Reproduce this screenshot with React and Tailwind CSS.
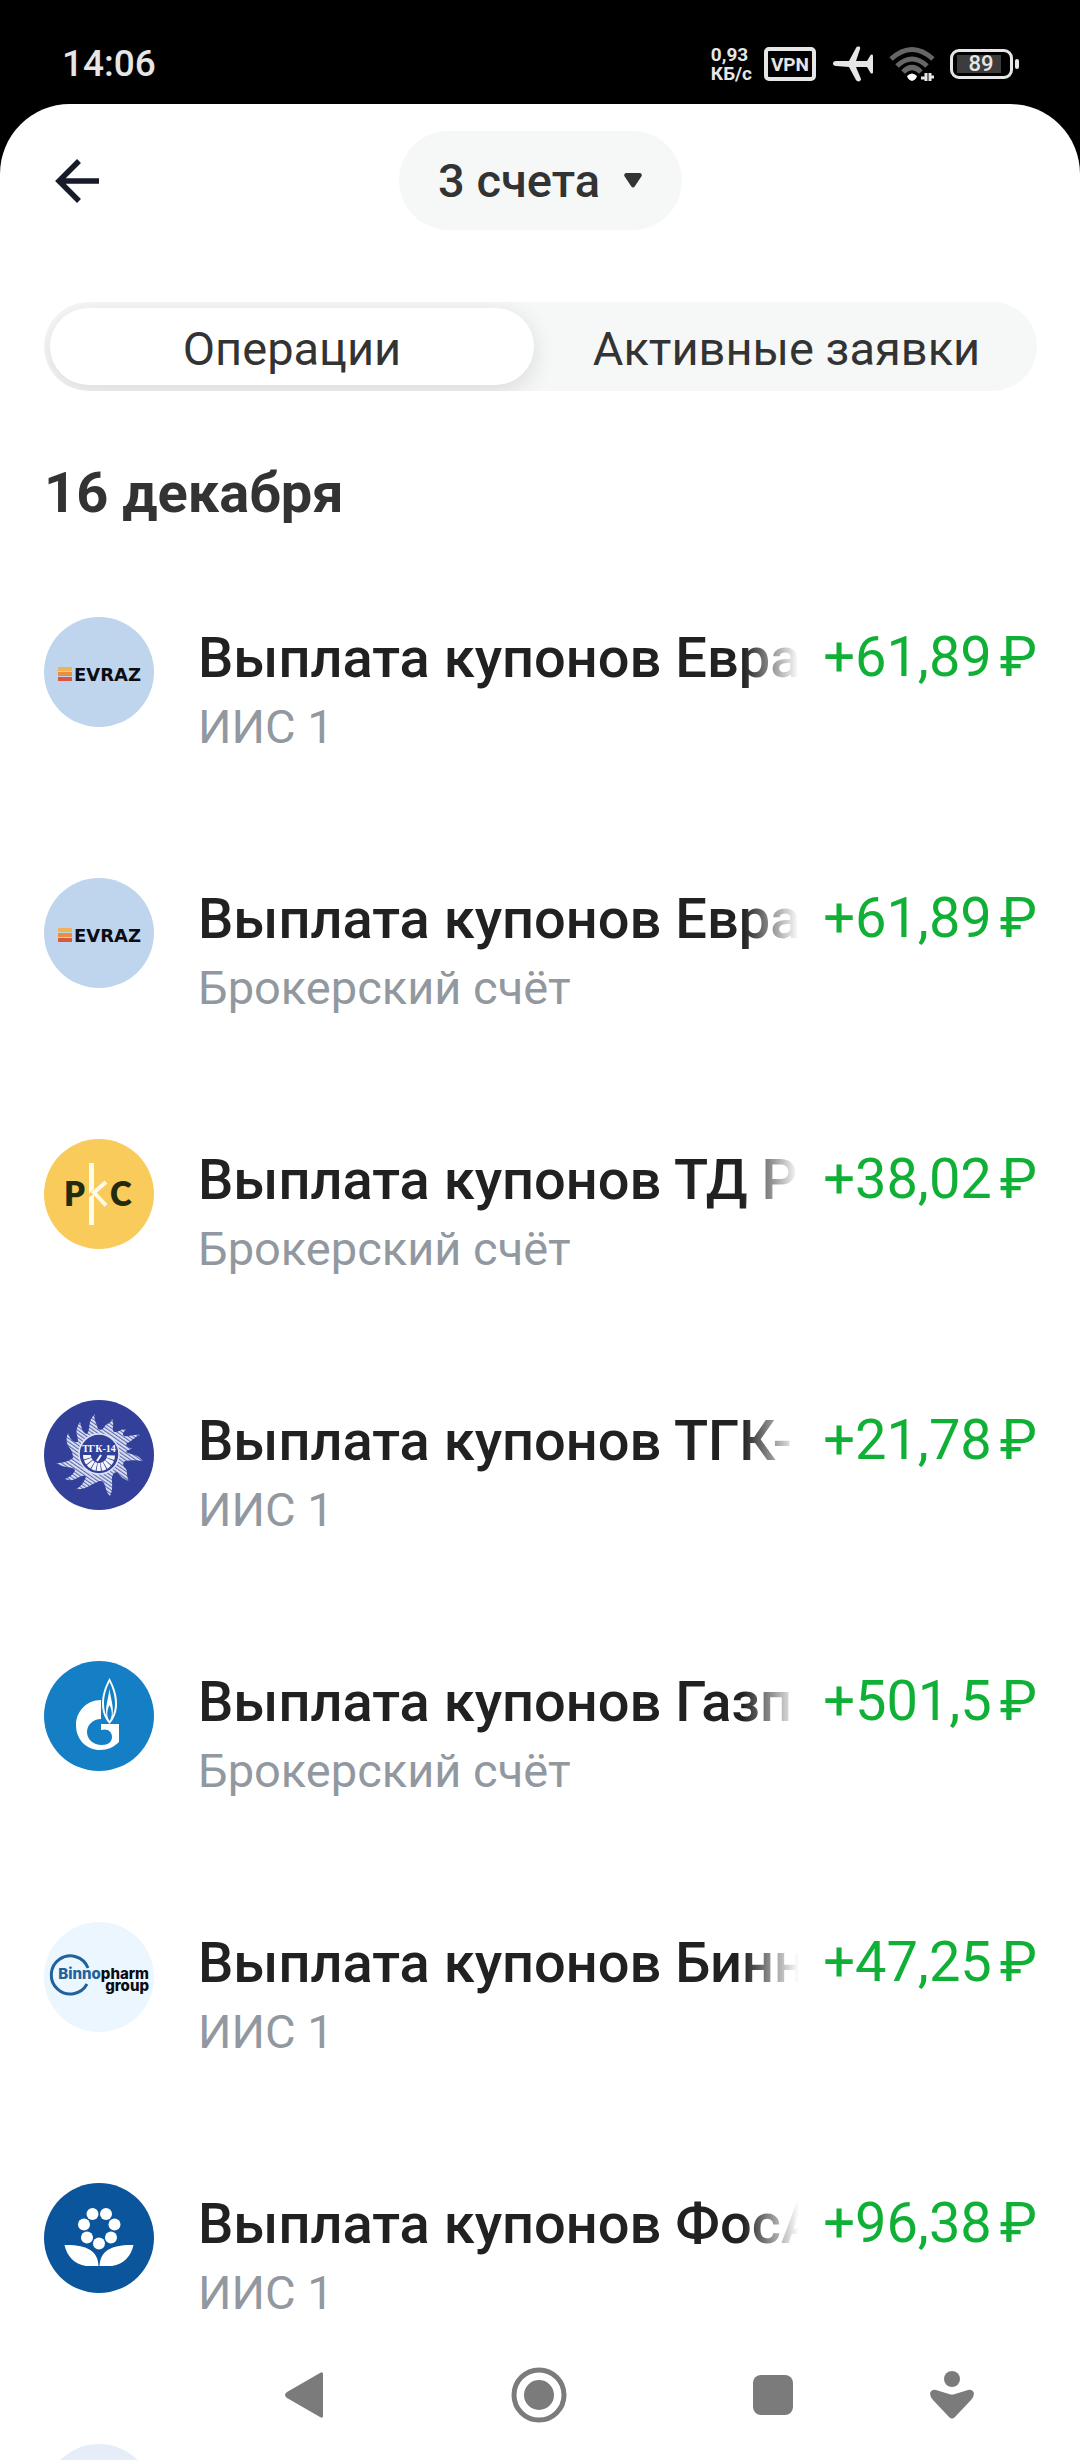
function EvrazLogo() {
    return (
        <svg viewBox="0 0 110 110" className="size-full" aria-hidden="true">
            <rect width="110" height="110" fill="#bfd5ed" />
            <rect x="14" y="50" width="14" height="4" fill="#f0b253" />
            <rect x="14" y="55" width="14" height="4" fill="#ec8f3c" />
            <rect x="14" y="60" width="14" height="4" fill="#d9583f" />
            <text x="30" y="64" fontSize="18" fontWeight="700" fontFamily="DejaVu Sans, sans-serif" fill="#0b0d14">
                EVRAZ
            </text>
        </svg>
    );
}

function RksLogo() {
    return (
        <svg viewBox="0 0 110 110" className="size-full" aria-hidden="true">
            <rect width="110" height="110" fill="#f9cb5b" />
            <g fontSize="33" fontWeight="800" fontFamily="Lato, sans-serif" fill="#222a10">
                <text x="20" y="67">P</text>
                <text x="66" y="67">C</text>
            </g>
            <path d="M45 24h5v26l-5 5zM45 58l5 -3v31h-5z" fill="#fffbea" />
            <path d="M62 43L50 53.500L62 66.500" fill="none" stroke="#fffbea" strokeWidth="4" />
        </svg>
    );
}

function TgkLogo() {
    return (
        <svg viewBox="0 0 110 110" className="size-full" aria-hidden="true">
            <defs>
                <pattern id="hatch" width="3" height="3" patternUnits="userSpaceOnUse" patternTransform="rotate(35)">
                    <rect width="3" height="3" fill="#5c68b2" />
                    <rect width="3" height="1.800" fill="#e4e8f6" />
                </pattern>
            </defs>
            <rect width="110" height="110" fill="#32409a" />
            <path
                d="M51 14C49 20 53 23 54 29C57 31 59 29 61 26C63 23 67 24 68 19C71 24 67 29 70 32C75 33 78 27 82 30C79 32 78 34 80 36C85 37 89 34 96 35C90 37 89 41 83 43C81 46 84 48 88 48C86 50 83 50 82 52C87 55 94 54 99 61C92 60 87 60 81 61C78 64 79 66 82 69C84 73 82 76 85 81C79 79 76 76 73 72C70 72 68 75 68 79C68 85 69 90 66 96C62 92 62 88 60 83C57 79 54 82 51 83C45 86 40 90 32 89C37 87 40 82 42 77C40 74 36 77 31 79C27 81 24 80 21 79C26 77 30 74 31 70C29 66 20 69 12 63C18 63 24 62 29 58C29 54 28 51 25 47C22 43 22 38 24 33C26 39 29 43 34 42C35 37 29 32 36 22C38 28 38 33 43 34C47 29 43 21 51 14Z"
                fill="url(#hatch)"
            />
            <circle cx="55" cy="54" r="20" fill="#32409a" stroke="#dfe4f5" strokeWidth="1.500" />
            <path d="M43 55a12 12 0 0 0 24 0" fill="none" stroke="#f3f5fc" strokeWidth="8" strokeDasharray="3.500 .7" />
            <path d="M57 55l-4 6" stroke="#fff" strokeWidth="2" />
            <text x="55" y="52" textAnchor="middle" fontSize="10" fontWeight="700" fontFamily="Liberation Serif, serif" fill="#fff">
                ТГК-14
            </text>
        </svg>
    );
}

function GazpromLogo() {
    return (
        <svg viewBox="0 0 110 110" className="size-full" aria-hidden="true">
            <rect width="110" height="110" fill="#147fc4" />
            <path
                d="M57 39C42 39 32 51 32 64C32 79 43 89 56 89C64 89 70 86 75 81V63H57V69C64 67 68 71 68 76C68 81 64 84 58 84C49 84 43 78 43 71C43 64 49 58 57 58Z"
                fill="#fff"
            />
            <path d="M65.500 17C60 27 58 35 58 43C58 51 61 58 65.500 63C70 58 73 51 73 43C73 35 71 27 65.500 17Z" fill="#fff" />
            <path d="M65.500 21C61.500 29 60 36 60 43C60 47 61 52 62.500 55C61 46 64 39 65.500 28C67 39 70 46 68.500 55C70 52 71 47 71 43C71 36 69.500 29 65.500 21Z" fill="#147fc4" />
            <path d="M65.500 44C63 49 62 55 65.500 60C69 55 68 49 65.500 44Z" fill="#147fc4" />
        </svg>
    );
}

function BinnopharmLogo() {
    return (
        <svg viewBox="0 0 110 110" className="size-full" aria-hidden="true">
            <rect width="110" height="110" fill="#ecf6fe" />
            <path d="M44 46A19 19 0 1 0 43 62" fill="none" stroke="#22629c" strokeWidth="3" />
            <g fontSize="15" fontWeight="800" fontFamily="Inter, sans-serif" fill="#0a0c12">
                <text x="105" y="57" textAnchor="end">
                    <tspan fill="#22629c">Binno</tspan>pharm
                </text>
                <text x="105" y="69" textAnchor="end">group</text>
            </g>
        </svg>
    );
}

function PhosagroLogo() {
    return (
        <svg viewBox="0 0 110 110" className="size-full" aria-hidden="true">
            <rect width="110" height="110" fill="#0b559c" />
            <g fill="#fff">
                <circle cx="48.500" cy="31" r="6" />
                <circle cx="62" cy="31" r="6" />
                <circle cx="40" cy="41.500" r="6" />
                <circle cx="70.500" cy="41.500" r="6" />
                <circle cx="43" cy="54.500" r="6" />
                <circle cx="67" cy="54.500" r="6" />
                <circle cx="55" cy="60.500" r="6" />
                <path d="M20.500 62C43 61.500 54 68 54.500 83H42C30 81 23 73 20.500 62Z" />
                <path d="M89.500 62C67 61.500 56 68 55.500 83H68C80 81 87 73 89.500 62Z" />
            </g>
        </svg>
    );
}

const operations = [
    { id: 1, title: "Выплата купонов Евра", account: "ИИС 1", amount: "+61,89", Logo: EvrazLogo },
    { id: 2, title: "Выплата купонов Евра", account: "Брокерский счёт", amount: "+61,89", Logo: EvrazLogo },
    { id: 3, title: "Выплата купонов ТД Р", account: "Брокерский счёт", amount: "+38,02", Logo: RksLogo },
    { id: 4, title: "Выплата купонов ТГК-", account: "ИИС 1", amount: "+21,78", Logo: TgkLogo },
    { id: 5, title: "Выплата купонов Газп", account: "Брокерский счёт", amount: "+501,5", Logo: GazpromLogo },
    { id: 6, title: "Выплата купонов Бинн", account: "ИИС 1", amount: "+47,25", Logo: BinnopharmLogo },
    { id: 7, title: "Выплата купонов ФосА", account: "ИИС 1", amount: "+96,38", Logo: PhosagroLogo },
];

function StatusBar() {
    return (
        <div className="flex h-[104px] shrink-0 items-center justify-between bg-black pt-6 pr-[61px] pl-[62px] text-[#e6e6e6]">
            <span className="text-[37px] leading-10 font-medium">14:06</span>
            <div className="flex items-center">
                <div className="text-[19px] leading-[19px] font-bold">
                    <div>0,93</div>
                    <div>КБ/с</div>
                </div>
                <span className="ml-3 flex h-[34px] w-[52px] items-center justify-center rounded-[5px] border-4 border-[#e6e6e6] text-[19px] leading-none font-bold">
                    VPN
                </span>
                <svg viewBox="0 0 40 36" className="ml-[17px] h-9 w-10" fill="#e6e6e6" aria-hidden="true">
                    <path d="M3 15H16L23 2C24 0 28 0 27 3L23 15H34L37 10C38 8 40 8 40 10V26C40 28 38 28 37 26L34 21H23L28 33C28 36 24 36 23 34L16 21L3 20C-1 20 -1 15 3 15Z" />
                </svg>
                <svg viewBox="0 0 46 36" className="ml-4 h-9 w-[46px]" fill="none" aria-hidden="true">
                    <g stroke="#666" strokeWidth="5">
                        <path d="M2 13Q23 -6 44 13" />
                        <path d="M8 20Q23 6 38 20" />
                        <path d="M14 26Q23 17 32 26" />
                    </g>
                    <path d="M18 30Q23 25 28 30Q27 34 23 35Q19 34 18 30Z" fill="#fff" />
                    <path d="M37 27V35M32 32H37M41 35V27M41 31H45" stroke="#e6e6e6" strokeWidth="3" />
                </svg>
                <span className="ml-[15px] flex h-[30px] w-[63px] items-center rounded-[9px] border-[3px] border-[#e6e6e6] px-1">
                    <span className="flex h-[18px] w-11 items-center justify-center bg-[#3c3c3c] pl-1 text-[22px] leading-none font-medium">
                        89
                    </span>
                </span>
                <span className="ml-0.5 h-[10px] w-1 rounded-sm bg-[#e6e6e6]" />
            </div>
        </div>
    );
}

function Operation({ title, account, amount, Logo }) {
    return (
        <li className="flex h-[261px] shrink-0 items-start">
            <div className="size-[110px] shrink-0 overflow-hidden rounded-full">
                <Logo />
            </div>
            <div className="ml-11 min-w-0 flex-1 pt-2">
                <div className="flex items-start">
                    <h3 className="min-w-0 flex-1 overflow-hidden text-[56px] leading-[66px] font-medium whitespace-nowrap text-[#212121] [mask-image:linear-gradient(to_left,transparent,black_56px)]">
                        {title}
                    </h3>
                    <p className="ml-6 flex gap-2 text-[56px] leading-[64px] whitespace-nowrap text-[#10b036]">
                        <span>{amount}</span>
                        <span>₽</span>
                    </p>
                </div>
                <p className="mt-2 text-[47px] leading-[56px] text-[#9298a0]">{account}</p>
            </div>
        </li>
    );
}

function NavBar() {
    return (
        <nav className="absolute inset-x-0 bottom-0 grid h-[130px] grid-cols-[187fr_234fr_236fr_232fr_125fr_66fr] place-items-center bg-white/60">
            <button type="button" aria-label="Назад" className="col-start-2">
                <svg viewBox="0 0 38 46" className="h-[46px] w-[38px]" fill="#7b7b7b" aria-hidden="true">
                    <path d="M2 20L35 1Q38 -1 38 2V44Q38 47 35 45L2 26Q-2 23 2 20Z" />
                </svg>
            </button>
            <button type="button" aria-label="Домой">
                <svg viewBox="0 0 56 56" className="size-14" aria-hidden="true">
                    <circle cx="28" cy="28" r="25" fill="none" stroke="#7b7b7b" strokeWidth="5" />
                    <circle cx="28" cy="28" r="15" fill="#7b7b7b" />
                </svg>
            </button>
            <button type="button" aria-label="Недавние" className="size-10 rounded-lg bg-[#7b7b7b]" />
            <button type="button" aria-label="Свернуть">
                <svg viewBox="0 0 44 48" className="h-12 w-11" fill="#7b7b7b" aria-hidden="true">
                    <circle cx="22" cy="8" r="8" />
                    <path d="M6 19L19 23Q22 24 25 23L38 19Q42 18 44 22Q44 26 41 29L25 46Q22 49 19 46L3 29Q0 26 0 22Q2 18 6 19Z" />
                </svg>
            </button>
        </nav>
    );
}

export default function App() {
    return (
        <div className="relative flex h-screen flex-col overflow-hidden bg-black font-[Roboto,sans-serif]">
            <StatusBar />
            <main className="min-h-0 flex-1 overflow-hidden rounded-t-[70px] bg-white pr-[43px] pl-11">
                <header className="grid grid-cols-[1fr_auto_1fr] items-center pt-[27px]">
                    <button type="button" aria-label="Назад" className="ml-[11px] justify-self-start">
                        <svg viewBox="0 0 44 44" className="size-11" fill="none" stroke="#171b28" strokeWidth="5.500" aria-hidden="true">
                            <path d="M24 2L4 22L24 42M4 22H44" />
                        </svg>
                    </button>
                    <button
                        type="button"
                        className="flex h-[99px] items-center gap-6 rounded-full bg-[#f6f8f8] pr-10 pl-[39px] text-[47px] leading-[56px] font-medium text-[#333]"
                    >
                        3 счета
                        <svg viewBox="0 0 18 15" className="h-[15px] w-[18px]" fill="#333" aria-hidden="true">
                            <path d="M2 0H16Q19 1 17 4L11 13Q9 16 7 13L1 4Q-1 1 2 0Z" />
                        </svg>
                    </button>
                </header>

                <div
                    role="tablist"
                    className="mt-[72px] grid h-[89px] grid-cols-[484fr_497fr] overflow-hidden rounded-full bg-[#f6f8f8] p-1.5 text-[47px] leading-[56px] text-[#333]"
                >
                    <button
                        type="button"
                        role="tab"
                        aria-selected="true"
                        className="rounded-full bg-white pt-1 shadow-[0_6px_24px_rgba(0,0,0,0.12)]"
                    >
                        Операции
                    </button>
                    <button type="button" role="tab" aria-selected="false" className="pt-1 pl-2">
                        Активные заявки
                    </button>
                </div>

                <h2 className="mt-[69px] text-[56px] leading-[66px] font-bold text-[#333]">16 декабря</h2>

                <ul className="mt-[91px]">
                    {operations.map((op) => (
                        <Operation key={op.id} {...op} />
                    ))}
                    <li className="size-[110px] rounded-full bg-[#bfd5ed]" />
                </ul>
            </main>
            <NavBar />
        </div>
    );
}
